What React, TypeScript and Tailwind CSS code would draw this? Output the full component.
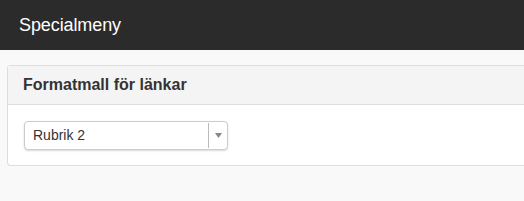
export default function App() {
  return (
    <div className="h-[201px] w-[524px] overflow-hidden bg-[#f9f9f9] font-['Liberation_Sans',Arial,sans-serif]">
      {/* Top bar */}
      <div className="flex h-[50px] items-center bg-[#2b2b2b] pl-[19px]">
        <span className="text-[18px] leading-none text-white tracking-[-0.1px]">Specialmeny</span>
      </div>

      {/* Panel */}
      <div className="ml-[7px] mt-[15px] w-[530px] rounded-l-[4px] border border-r-0 border-[#dddddd] bg-white">
        <div className="flex h-[39px] items-center border-b border-[#dddddd] bg-[#f4f4f4] pl-[15px]">
          <h3 className="text-[16px] font-bold text-[#333333]">Formatmall för länkar</h3>
        </div>
        <div className="px-[16px] pt-[16px] pb-[15px]">
          <div className="flex h-[29px] w-[204px] items-stretch rounded-[4px] border border-[#cccccc] bg-white shadow-[0_1px_2px_rgba(0,0,0,0.15)]">
            <span className="flex flex-1 items-center pl-[8px] text-[14px] text-[#333333]">Rubrik 2</span>
            <span className="my-[1px] w-px bg-[#bbbbbb]" />
            <span className="flex w-[18px] items-center justify-center">
              <svg width="7" height="5" viewBox="0 0 7 5">
                <path d="M0 0h7L3.5 5z" fill="#888888" />
              </svg>
            </span>
          </div>
        </div>
      </div>
    </div>
  );
}
